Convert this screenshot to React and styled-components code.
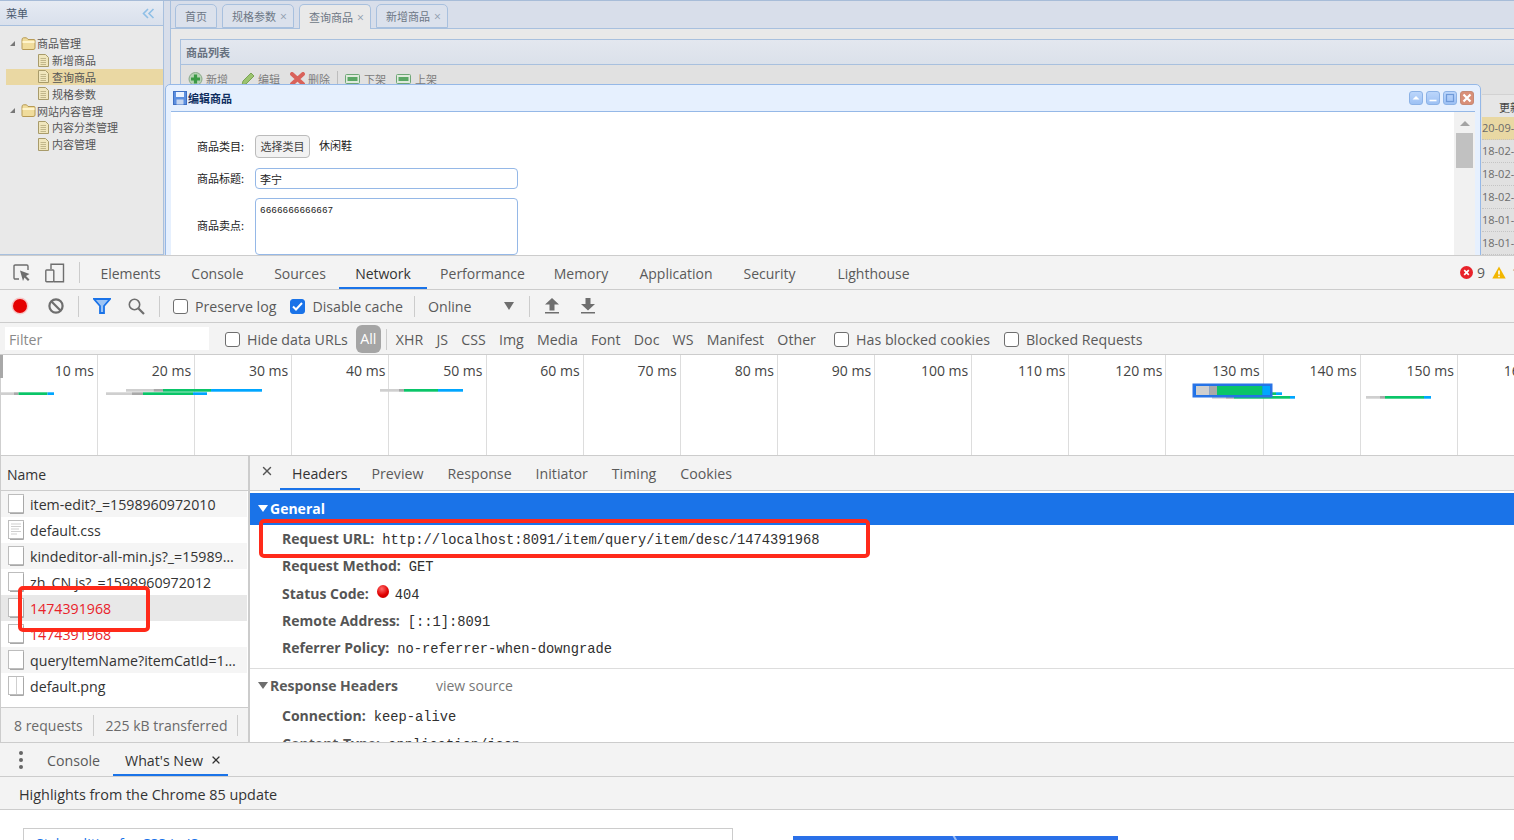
import React from 'react';
import styled, {createGlobalStyle} from 'styled-components';
import {X} from 'lucide-react';

const cjk = '"Noto Sans CJK SC", "Liberation Sans", sans-serif';
const ui = '"Open Sans", "Noto Sans", sans-serif';
const mono = '"Liberation Mono", monospace';

const GlobalStyle = createGlobalStyle`
    html, body { margin: 0; padding: 0; background: #fff; }
    * { box-sizing: border-box; }
`;

const Screen = styled.div`
    position: relative;
    width: 1514px;
    height: 840px;
    overflow: hidden;
    display: flex;
    flex-direction: column;
    font-family: ${ui};
`;

/* ---------- the admin page behind devtools ---------- */

const Page = styled.section`
    position: relative;
    flex: 0 0 255px;
    display: flex;
    overflow: hidden;
    background: #d8deea;
    border-top: 1px solid #a7bcd8;
    font-family: ${cjk};
    font-size: 11px;
`;

const Sidebar = styled.aside`
    flex: 0 0 164px;
    background: #e9e9e9;
    border-right: 1px solid #a8c0de;
    border-bottom: 1px solid #a8c0de;
`;

const SideHead = styled.div`
    height: 25px;
    display: flex;
    align-items: center;
    justify-content: space-between;
    padding: 0 8px 0 6px;
    color: #4b5a6e;
    background: linear-gradient(#e6ebf3, #d9e0ec);
    border-bottom: 1px solid #a8c0de;
`;

const Tree = styled.div`
    padding: 9px 0 0 6px;
`;

const TreeRow = styled.div`
    height: 16.8px;
    display: flex;
    align-items: center;
    padding-left: ${p => (p.$leaf ? 32 : 4)}px;
    color: #555;
    background: ${p => (p.$active ? '#ead8a3' : 'transparent')};
    gap: ${p => (p.$leaf ? 3 : 1)}px;
`;

const Caret = styled.span`
    width: 0;
    height: 0;
    margin-right: 5px;
    border-style: solid;
    border-width: 0 0 5px 5px;
    border-color: transparent transparent #777 transparent;
`;

const Main = styled.div`
    flex: 1;
    min-width: 0;
    margin-left: 6px;
    display: flex;
    flex-direction: column;
    border-left: 1px solid #a8c0de;
`;

const TabStrip = styled.div`
    height: 28px;
    padding: 3px 0 0 4px;
    display: flex;
    gap: 5px;
    border-bottom: 1px solid #a8c0de;
`;

const PageTab = styled.div`
    width: ${p => (p.$close ? 72 : 42)}px;
    height: ${p => (p.$active ? 25 : 24)}px;
    padding-left: 9px;
    display: flex;
    align-items: center;
    gap: 4px;
    color: #6d7785;
    background: ${p => (p.$active ? '#e9e9e9' : '#dbe1ec')};
    border: 1px solid #a8c0de;
    border-bottom: ${p => (p.$active ? 'none' : '1px solid #a8c0de')};
    border-radius: 5px 5px 0 0;

    span { color: #8f9cae; font-size: 12px; font-family: ${ui}; }
`;

const MainBody = styled.div`
    flex: 1;
    padding: 10px 0 0 9px;
    background: #e9e9e9;
`;

const Panel = styled.div`
    border-left: 1px solid #a8c0de;
    height: 100%;
`;

const PanelHead = styled.div`
    height: 26px;
    padding-left: 5px;
    display: flex;
    align-items: center;
    font-weight: 700;
    color: #67717f;
    background: linear-gradient(#e3e7ef, #dbe1ea);
    border-top: 1px solid #a8c0de;
    border-bottom: 1px solid #a8c0de;
`;

const PanelBody = styled.div`
    height: 190px;
    background: #e1e1e1;
    display: flex;
    flex-direction: column;
`;

const ActionBar = styled.div`
    height: 29px;
    padding: 6px 0 0 7px;
    display: flex;
    align-items: flex-start;
    color: #7d7d7d;
`;

const Action = styled.div`
    display: flex;
    align-items: center;
    gap: ${p => p.$inner || 3}px;
    margin-right: ${p => p.$gap || 11}px;
`;

const ActionSep = styled.i`
    width: 1px;
    height: 18px;
    background: #bdbdbd;
    margin-right: 7px;
`;

const GridStub = styled.div`
    margin-left: auto;
    width: 32px;
    font-family: ${ui};
    color: #6b6b6b;
    font-size: 11px;
`;

const GridHead = styled.div`
    height: 23px;
    padding: 4px 0 0 17px;
    font-family: ${cjk};
    color: #444;
    white-space: nowrap;
    overflow: hidden;
    background: #e6e6e6;
    border-top: 1px solid #d2d2d2;
`;

const GridCell = styled.div`
    height: 23px;
    line-height: 22px;
    white-space: nowrap;
    overflow: hidden;
    background: ${p => (p.$active ? '#e9d8a3' : 'transparent')};
    border-bottom: 1px dotted #c4c4c4;
`;

const Modal = styled.div`
    position: absolute;
    left: 165px;
    top: 83px;
    width: 1316px;
    height: 240px;
    background: #e6f0fe;
    border: 1px solid #95b8e7;
    border-radius: 5px 5px 0 0;
    padding: 0 5px;
`;

const ModalHead = styled.div`
    height: 26px;
    display: flex;
    align-items: center;
    gap: 1px;
    padding-left: 2px;
    color: #0e2d5f;
    font-weight: 700;
`;

const WinButtons = styled.div`
    margin-left: auto;
    display: flex;
    gap: 3px;
    padding-right: 1px;
`;

const WinButton = styled.div`
    width: 14px;
    height: 14px;
    border-radius: 3px;
    display: flex;
    align-items: center;
    justify-content: center;
    border: 1px solid ${p => (p.$close ? '#c58a76' : '#8cb2e6')};
    background: ${p => (p.$close ? '#d98f78' : 'linear-gradient(#bcd6fb, #9dc1f4)')};
`;

const ModalBody = styled.div`
    height: 200px;
    display: flex;
    background: #fff;
    border-top: 1px solid #95b8e7;
`;

const Form = styled.form`
    flex: 1;
    padding: 23px 0 0 26px;
    display: grid;
    grid-template-columns: 58px 263px;
    grid-template-rows: 24px 21px 57px;
    row-gap: 9px;
    align-items: center;
    align-content: start;
    color: #222;
`;

const FieldLabel = styled.span`
    padding-bottom: ${p => p.$lift || 2}px;
`;

const PickRow = styled.div`
    display: flex;
    align-items: center;
    gap: 9px;
    align-self: start;
    white-space: nowrap;
    line-height: 20px;
`;

const PickButton = styled.button`
    width: 55px;
    height: 23px;
    padding: 0 0 2px;
    font: 11px ${cjk};
    color: #444;
    background: #f2f2f2;
    border: 1px solid #bbb;
    border-radius: 4px;
`;

const PickValue = styled.span`
    padding-bottom: 3px;
`;

const TextInput = styled.input`
    width: 263px;
    height: 21px;
    padding: 0 4px;
    font: 11px ${cjk};
    color: #222;
    border: 1px solid #95b8e7;
    border-radius: 4px;
`;

const TextArea = styled.textarea`
    width: 263px;
    height: 57px;
    padding: 6px 4px;
    resize: none;
    font: 9.4px ${mono};
    color: #222;
    border: 1px solid #95b8e7;
    border-radius: 4px;
`;

const ScrollTrack = styled.div`
    width: 21px;
    padding-top: 9px;
    background: #f1f1f1;
    display: flex;
    flex-direction: column;
    align-items: center;

    i {
        width: 0;
        height: 0;
        border-style: solid;
        border-width: 0 5px 5px 5px;
        border-color: transparent transparent #a3a3a3 transparent;
    }

    b {
        width: 17px;
        height: 35px;
        margin-top: 7px;
        background: #c1c1c1;
    }
`;

/* ---------- devtools ---------- */

const Bar = styled.div`
    flex: 0 0 ${p => p.$h}px;
    display: flex;
    align-items: center;
    background: #f3f3f3;
    border-bottom: 1px solid #ccc;
    color: #5a5a5a;
    font-size: 14.2px;
    white-space: nowrap;
    overflow: hidden;
`;

const TopBar = styled(Bar)`
    border-top: 1px solid #ccc;
    padding-left: 13px;
    align-items: stretch;
    font-size: 14px;
`;

const IconSlot = styled.div`
    display: flex;
    align-items: center;
    margin-right: ${p => p.$gap || 0}px;
    margin-left: ${p => p.$left || 0}px;
`;

const Sep = styled.i`
    flex: none;
    width: 1px;
    height: 21px;
    background: #ccc;
    margin: ${p => p.$m || '0 14px'};
    align-self: center;
`;

const DevTab = styled.div`
    display: flex;
    align-items: center;
    justify-content: center;
    flex: none;
    width: ${p => (p.$w ? `${p.$w}px` : 'auto')};
    padding: 1px 0 0;
    color: ${p => (p.$active ? '#333' : '#5a5a5a')};
    border-bottom: 2px solid ${p => (p.$active ? '#1a73e8' : 'transparent')};
    border-top: 2px solid transparent;
`;

const Counts = styled.div`
    margin-left: auto;
    display: flex;
    align-items: center;
    gap: 4px;
    margin-right: -6px;
`;

const CheckBox = styled.span`
    flex: none;
    width: 15px;
    height: 15px;
    border-radius: 3px;
    display: inline-flex;
    align-items: center;
    justify-content: center;
    border: 1px solid ${p => (p.$on ? '#1a73e8' : '#6e6e6e')};
    background: ${p => (p.$on ? '#1a73e8' : '#fff')};
`;

const CheckLabel = styled.label`
    display: flex;
    align-items: center;
    gap: 7px;
    margin-left: ${p => p.$left || 0}px;
`;

const ToolRow = styled(Bar)`
    padding-left: 13px;
`;

const FilterRow = styled(ToolRow)`
    padding-top: 1px;
`;

const Filter = styled.div`
    width: 204px;
    height: 23px;
    margin: -1px 16px 0 -8px;
    padding-left: 4px;
    line-height: 26px;
    background: #fff;
    color: #8a8a8a;
`;

const AllPill = styled.span`
    width: 25px;
    height: 28px;
    margin: -1px 4px 0 8px;
    border-radius: 6px;
    display: flex;
    align-items: center;
    justify-content: center;
    color: #fff;
    background: #a5a5a5;
`;

const TypeItem = styled.span`
    margin-right: 13.2px;
`;

const Overview = styled.div`
    position: relative;
    flex: 0 0 101px;
    display: flex;
    padding-left: 0.8px;
    background: #fff;
    border-bottom: 1px solid #ccc;
    overflow: hidden;
`;

const Tick = styled.div`
    flex: 0 0 97.15px;
    padding: 6px 3px 0 0;
    text-align: right;
    color: #444;
    font-size: 14px;
    white-space: nowrap;
    border-right: 1px solid #ddd;
`;

const ChartLayer = styled.svg`
    position: absolute;
    left: 0;
    top: 0;
    width: 1514px;
    height: 100px;
`;

const Split = styled.div`
    flex: 0 0 287px;
    display: flex;
    overflow: hidden;
    background: #fff;
    border-bottom: 1px solid #ccc;
`;

const NamePane = styled.div`
    flex: 0 0 250px;
    display: flex;
    flex-direction: column;
    border-left: 1px solid #ccc;
    border-right: 2px solid #ccc;
`;

const NameHead = styled.div`
    flex: 0 0 35px;
    display: flex;
    align-items: center;
    padding: 2px 0 0 6px;
    color: #333;
    font-size: 14px;
    background: #f3f3f3;
    border-bottom: 1px solid #ccc;
`;

const ReqRow = styled.div`
    height: 26px;
    display: flex;
    align-items: center;
    gap: 5px;
    padding-left: 7px;
    margin-right: 1px;
    font-size: 14.2px;
    color: ${p => (p.$error ? '#e8222a' : '#333')};
    background: ${p => (p.$selected ? '#e8e8e8' : p.$even ? '#f5f5f5' : '#fff')};
    white-space: nowrap;
    overflow: hidden;
`;

const NameText = styled.span`
    overflow: hidden;
    text-overflow: ellipsis;
    width: 208px;
`;

const NameFoot = styled.div`
    margin-top: auto;
    flex: 0 0 35px;
    display: flex;
    align-items: center;
    padding-left: 13px;
    color: #6a6a6a;
    font-size: 14px;
    white-space: nowrap;
    background: #f3f3f3;
    border-top: 1px solid #ccc;
`;

const DetailPane = styled.div`
    flex: 1;
    min-width: 0;
    overflow: hidden;
`;

const DetailTabs = styled(Bar)`
    height: 35px;
    align-items: stretch;
    padding-left: 10px;
`;

const CloseBox = styled.div`
    display: flex;
    align-items: center;
    color: #555;
    margin-right: 6px;
    padding-bottom: 4px;
`;

const DetailTab = styled(DevTab)`
    padding: 0 12px;
`;

const SectionTitle = styled.div`
    height: ${p => (p.$blue ? 32 : 33)}px;
    margin-top: ${p => (p.$blue ? 2 : 0)}px;
    display: flex;
    align-items: center;
    gap: 2px;
    padding: 0 0 1px 8px;
    font-weight: 700;
    font-size: 14px;
    color: ${p => (p.$blue ? '#fff' : '#5a5a5a')};
    background: ${p => (p.$blue ? '#1a73e8' : '#fff')};

    em {
        font-style: normal;
        font-weight: 400;
        color: #777;
        margin-left: 36px;
    }
`;

const Triangle = styled.i`
    width: 0;
    height: 0;
    border-style: solid;
    border-width: 7px 5px 0 5px;
    border-color: ${p => (p.$blue ? '#fff' : '#6e6e6e')} transparent transparent transparent;
`;

const HeaderList = styled.div`
    padding: 0 0 7px 32px;
    border-bottom: ${p => (p.$open ? 'none' : '1px solid #ddd')};
`;

const HeaderRow = styled.div`
    height: 27.25px;
    line-height: 27px;
    display: flex;
    align-items: baseline;
    gap: 8px;
    white-space: nowrap;
    font-size: 14px;
    color: #555;

    b { font-weight: 700; }
    span { font: 13.75px ${mono}; color: #303030; }
`;

const StatusDot = styled.i`
    align-self: center;
    width: 12px;
    height: 13px;
    margin: -4px -2px 0 0;
    border-radius: 50%;
    background: radial-gradient(circle at 40% 30%, #ff6a6a, #e00000 55%, #b40000);
`;

const DrawerTabs = styled(Bar)`
    align-items: stretch;
    padding-left: 19px;
`;

const Dots = styled.div`
    width: 4px;
    margin-right: 14px;
    display: flex;
    flex-direction: column;
    justify-content: center;
    gap: 3px;

    i { width: 4px; height: 4px; border-radius: 50%; background: #666; }
`;

const DrawerTab = styled(DevTab)`
    padding: 1px ${p => (p.$active ? '6px' : '10px')} 0 ${p => (p.$active ? '12px' : '10px')};
    gap: 7px;
    margin-left: ${p => p.$left || 0}px;
`;

const Highlights = styled(Bar)`
    padding: 2px 0 0 19px;
    font-size: 14.4px;
    color: #333;
`;

const NewsArea = styled.div`
    flex: 1;
    display: flex;
    align-items: flex-start;
    padding: 18px 0 0 23px;
    background: #fff;
    overflow: hidden;
`;

const NewsCard = styled.div`
    width: 710px;
    height: 40px;
    padding: 5px 0 0 12px;
    font-size: 14px;
    color: #1a73e8;
    border: 1px solid #ccc;
`;

const NewsImage = styled.div`
    position: relative;
    width: 325px;
    height: 20px;
    margin: 8px 0 0 60px;
    overflow: hidden;
    background: #2a70e8;

    &::after {
        content: '';
        position: absolute;
        left: 162px;
        top: -2px;
        width: 2px;
        height: 12px;
        background: #9fc0f5;
        transform: rotate(-30deg);
    }
`;

const Annotation = styled.div`
    position: absolute;
    left: ${p => p.$x}px;
    top: ${p => p.$y}px;
    width: ${p => p.$w}px;
    height: ${p => p.$h}px;
    border: 4px solid #ff2a1a;
    border-radius: 5px;
    pointer-events: none;
`;

/* ---------- drawings ---------- */

const Folder = () => (
    <svg width="15" height="13" viewBox="0 0 15 13">
        <path d="M1 3 L1 11.5 Q1 12.5 2 12.5 L12 12.5 Q14 12.5 14 11 L14 3.5 Q14 2.5 13 2.5 L7 2.5 L5.5 .8 L2.5 .8 Q1 .8 1 3Z" fill="#f0dc9c" stroke="#b79a55" />
        <path d="M1.5 5 L13.5 5" stroke="#fff4cc" strokeWidth="2" />
    </svg>
);

const Doc = () => (
    <svg width="11" height="13" viewBox="0 0 11 13">
        <path d="M.5 .5 H7.5 L10.5 3.5 V12.5 H.5Z" fill="#f0e6bd" stroke="#a89b6a" />
        <path d="M2.5 4.5 H8 M2.5 6.5 H8 M2.5 8.5 H8 M2.5 10.5 H8" stroke="#b5a97c" strokeWidth=".8" />
    </svg>
);

const Collapse = () => (
    <svg width="13" height="11" viewBox="0 0 13 11" fill="none" stroke="#8fbfe6" strokeWidth="1.6">
        <path d="M6 1 L1.5 5.5 L6 10 M11.5 1 L7 5.5 L11.5 10" />
    </svg>
);

const PlusIcon = () => (
    <svg width="15" height="14" viewBox="0 0 15 14">
        <circle cx="7.5" cy="7" r="6.5" fill="#b6d3b4" stroke="#8aa98a" />
        <path d="M7.5 2.5 V11.5 M3 7 H12" stroke="#3b9a45" strokeWidth="3.2" />
    </svg>
);

const PencilIcon = () => (
    <svg width="15" height="14" viewBox="0 0 15 14">
        <path d="M2 13 L3 9 L11 1 L14 4 L6 12Z" fill="#9cc46f" stroke="#7aa356" />
    </svg>
);

const CrossIcon = () => (
    <svg width="15" height="14" viewBox="0 0 15 14">
        <path d="M2 2 L13 12 M13 2 L2 12" stroke="#d9625a" strokeWidth="4" strokeLinecap="round" />
    </svg>
);

const BarIcon = () => (
    <svg width="15" height="12" viewBox="0 0 15 12">
        <rect x=".5" y="1.5" width="14" height="9" rx="1" fill="#dfeadd" stroke="#6fa777" />
        <rect x="2.5" y="4" width="10" height="4" fill="#5aa765" />
    </svg>
);

const SaveIcon = () => (
    <svg width="14" height="14" viewBox="0 0 14 14">
        <rect x=".5" y=".5" width="13" height="13" fill="#5c8fe0" stroke="#3f70c4" />
        <rect x="3" y="1" width="8" height="5" fill="#eaf2ff" />
        <rect x="3.5" y="8.5" width="7" height="5" fill="#c6d6ef" />
    </svg>
);

const WinGlyph = ({kind}) => (
    <svg width="10" height="10" viewBox="0 0 10 10">
        {kind === 'up' && <path d="M1.5 6.5 L5 3 L8.5 6.5Z" fill="#fff" />}
        {kind === 'min' && <path d="M1.5 7.5 H8.5" stroke="#fff" strokeWidth="1.6" />}
        {kind === 'max' && <rect x="1.5" y="1.5" width="7" height="7" fill="none" stroke="#6f9ad9" strokeWidth="1.2" />}
        {kind === 'close' && <path d="M1.5 1.5 L8.5 8.5 M8.5 1.5 L1.5 8.5" stroke="#fff" strokeWidth="2.2" />}
    </svg>
);

const InspectIcon = () => (
    <svg width="18" height="18" viewBox="0 0 18 18" fill="none">
        <path d="M6 15 H2.2 Q1 15 1 13.8 V2.2 Q1 1 2.2 1 H13.8 Q15 1 15 2.2 V6" stroke="#6e6e6e" strokeWidth="1.4" />
        <path d="M7 6.5 L16.5 10 L13 12 L16.5 15.5 L15 17 L11.5 13.5 L10 17Z" fill="#6e6e6e" />
    </svg>
);

const DeviceIcon = () => (
    <svg width="20" height="20" viewBox="0 0 20 20" fill="none" stroke="#6e6e6e" strokeWidth="1.4">
        <path d="M6 6 V1.2 H18.5 V18.8 H9" />
        <rect x=".8" y="7" width="8" height="11.8" rx=".8" />
    </svg>
);

const ErrorIcon = () => (
    <svg width="13" height="13" viewBox="0 0 13 13">
        <circle cx="6.5" cy="6.5" r="6.5" fill="#e8222a" />
        <path d="M4.2 4.2 L8.8 8.8 M8.8 4.2 L4.2 8.8" stroke="#fff" strokeWidth="1.7" />
    </svg>
);

const WarnIcon = () => (
    <svg width="14" height="13" viewBox="0 0 14 13">
        <path d="M7 .5 L13.7 12.5 H.3Z" fill="#f2b600" />
        <path d="M7 4.5 V8.5 M7 9.8 V11.3" stroke="#fff" strokeWidth="1.6" />
    </svg>
);

const RecordIcon = () => (
    <svg width="18" height="18" viewBox="0 0 18 18">
        <circle cx="9" cy="9" r="8.5" fill="#f5c6c6" />
        <circle cx="9" cy="9" r="7" fill="#e50000" />
    </svg>
);

const ClearIcon = () => (
    <svg width="16" height="16" viewBox="0 0 16 16" fill="none" stroke="#6e6e6e" strokeWidth="2.2">
        <circle cx="8" cy="8" r="6.6" />
        <path d="M3.5 3.5 L12.5 12.5" />
    </svg>
);

const FunnelIcon = () => (
    <svg width="18" height="16" viewBox="0 0 18 16" fill="none">
        <path d="M1 1 H17 L11 8 V15 H7 V8Z" stroke="#1a73e8" strokeWidth="1.8" fill="#9cc4f5" />
    </svg>
);

const SearchIcon = () => (
    <svg width="17" height="17" viewBox="0 0 17 17" fill="none" stroke="#6e6e6e">
        <circle cx="6.5" cy="6.5" r="5.2" strokeWidth="1.6" />
        <path d="M10.5 10.5 L16 16" strokeWidth="2.2" />
    </svg>
);

const ArrowIcon = ({down}) => (
    <svg width="14" height="16" viewBox="0 0 14 16" fill="#6e6e6e">
        {down
            ? <path d="M4.5 0 H9.5 V6 H14 L7 12.5 L0 6 H4.5Z M0 14 H14 V15.5 H0Z" />
            : <path d="M7 0 L14 6.5 H9.5 V12.5 H4.5 V6.5 H0Z M0 14 H14 V15.5 H0Z" />}
    </svg>
);

const Tick2 = () => (
    <svg width="11" height="9" viewBox="0 0 11 9" fill="none" stroke="#fff" strokeWidth="2">
        <path d="M1 4.5 L4 7.5 L10 1" />
    </svg>
);

const FileIcon = ({kind}) => (
    <svg width="17" height="20" viewBox="0 0 17 20" style={{flex: 'none'}}>
        <rect x=".5" y=".5" width="15" height="18" fill="#fff" stroke="#bdbdbd" />
        <path d="M15.5 2 V19.5 H2" stroke="#a8a8a8" fill="none" />
        {kind === 'css' && <path d="M3 4 H13 M3 6.5 H13 M3 9 H11 M3 11.5 H13 M3 14 H9" stroke="#cfcfcf" />}
        {kind === 'png' && <path d="M8.5 1 V18" stroke="#cfcfcf" />}
    </svg>
);

/* ---------- data ---------- */

const pageTabs = [
    {label: '首页'},
    {label: '规格参数', close: true},
    {label: '查询商品', close: true, active: true},
    {label: '新增商品', close: true},
];

const tree = [
    {label: '商品管理'},
    {label: '新增商品', leaf: true},
    {label: '查询商品', leaf: true, active: true},
    {label: '规格参数', leaf: true},
    {label: '网站内容管理'},
    {label: '内容分类管理', leaf: true},
    {label: '内容管理', leaf: true},
];

const devTabs = [
    ['Elements', 87], ['Console', 87], ['Sources', 78], ['Network', 88], ['Performance', 111],
    ['Memory', 86], ['Application', 104], ['Security', 83], ['Lighthouse', 125],
];
const types = ['XHR', 'JS', 'CSS', 'Img', 'Media', 'Font', 'Doc', 'WS', 'Manifest', 'Other'];
const ticks = [10, 20, 30, 40, 50, 60, 70, 80, 90, 100, 110, 120, 130, 140, 150, 160];

const requests = [
    {name: 'item-edit?_=1598960972010'},
    {name: 'default.css', kind: 'css'},
    {name: 'kindeditor-all-min.js?_=1598960972011'},
    {name: 'zh_CN.js?_=1598960972012'},
    {name: '1474391968', error: true, selected: true},
    {name: '1474391968', error: true},
    {name: 'queryItemName?itemCatId=1234567890'},
    {name: 'default.png', kind: 'png'},
];

// y, then x positions of one waterfall bar: start, waiting, receiving, download, end
const bars = [
    [392.3, 0, 14, 18.5, 47.5, 54],
    [389, 126, 153.5, 163, 211, 262],
    [392.3, 106, 132, 143, 193, 207],
    [389, 380, 399, 404, 438, 463],
    [392.3, 1200, 1212, 1222, 1276, 1282],
    [396, 1212, 1226, 1234, 1290, 1295],
    [396, 1366, 1380, 1385, 1424, 1431],
];

const Waterfall = ({y, top, xs, h = 2.7}) => {
    const colors = ['#cfcfcf', '#a9a9a9', '#0ac568', '#00a6ff'];
    return colors.map((c, i) => (
        <rect key={c} x={xs[i]} y={y - top} width={xs[i + 1] - xs[i]} height={h} fill={c} />
    ));
};

const App = () => (
    <Screen>
        <GlobalStyle />

        <Page>
            <Sidebar>
                <SideHead>菜单<Collapse /></SideHead>
                <Tree>
                    {tree.map(t => (
                        <TreeRow key={t.label} $leaf={t.leaf} $active={t.active}>
                            {!t.leaf && <Caret />}
                            {t.leaf ? <Doc /> : <Folder />}
                            {t.label}
                        </TreeRow>
                    ))}
                </Tree>
            </Sidebar>
            <Main>
                <TabStrip>
                    {pageTabs.map(t => (
                        <PageTab key={t.label} $active={t.active} $close={t.close}>
                            {t.label}
                            {t.close && <span>×</span>}
                        </PageTab>
                    ))}
                </TabStrip>
                <MainBody>
                    <Panel>
                        <PanelHead>商品列表</PanelHead>
                        <PanelBody>
                            <ActionBar>
                                <Action $gap={12}><PlusIcon />新增</Action>
                                <Action $gap={10}><PencilIcon />编辑</Action>
                                <Action $gap={7}><CrossIcon />删除</Action>
                                <ActionSep />
                                <Action $gap={10} $inner={4}><BarIcon />下架</Action>
                                <Action $inner={4}><BarIcon />上架</Action>
                            </ActionBar>
                            <GridStub>
                                <GridHead>更新</GridHead>
                                <GridCell $active>20-09-</GridCell>
                                <GridCell>18-02-</GridCell>
                                <GridCell>18-02-</GridCell>
                                <GridCell>18-02-</GridCell>
                                <GridCell>18-01-</GridCell>
                                <GridCell>18-01-</GridCell>
                            </GridStub>
                        </PanelBody>
                    </Panel>
                </MainBody>
            </Main>

            <Modal>
                <ModalHead>
                    <SaveIcon />编辑商品
                    <WinButtons>
                        <WinButton><WinGlyph kind="up" /></WinButton>
                        <WinButton><WinGlyph kind="min" /></WinButton>
                        <WinButton><WinGlyph kind="max" /></WinButton>
                        <WinButton $close><WinGlyph kind="close" /></WinButton>
                    </WinButtons>
                </ModalHead>
                <ModalBody>
                    <Form>
                        <FieldLabel>商品类目:</FieldLabel>
                        <PickRow>
                            <PickButton type="button">选择类目</PickButton>
                            <PickValue>休闲鞋</PickValue>
                        </PickRow>
                        <FieldLabel $lift={1}>商品标题:</FieldLabel>
                        <TextInput defaultValue="李宁" />
                        <FieldLabel $lift={4}>商品卖点:</FieldLabel>
                        <TextArea defaultValue="6666666666667" />
                    </Form>
                    <ScrollTrack><i /><b /></ScrollTrack>
                </ModalBody>
            </Modal>
        </Page>

        <TopBar $h={35}>
            <IconSlot $gap={14}><InspectIcon /></IconSlot>
            <IconSlot><DeviceIcon /></IconSlot>
            <Sep $m="0 7px 0 14px" />
            {devTabs.map(([t, w]) => (
                <DevTab key={t} $w={w} $active={t === 'Network'}>{t}</DevTab>
            ))}
            <Counts>
                <ErrorIcon />9
                <IconSlot $left={3} $gap={2}><WarnIcon /></IconSlot>
                1
            </Counts>
        </TopBar>

        <ToolRow $h={33}>
            <IconSlot $left={-2} $gap={19}><RecordIcon /></IconSlot>
            <IconSlot><ClearIcon /></IconSlot>
            <Sep />
            <IconSlot $gap={17}><FunnelIcon /></IconSlot>
            <IconSlot><SearchIcon /></IconSlot>
            <Sep $m="0 13px 0 14px" />
            <CheckLabel><CheckBox />Preserve log</CheckLabel>
            <CheckLabel $left={14}><CheckBox $on><Tick2 /></CheckBox>Disable cache</CheckLabel>
            <Sep $m="0 13px 0 11px" />
            Online
            <IconSlot $left={32}>
                <svg width="10" height="8" viewBox="0 0 10 8"><path d="M0 0 H10 L5 8Z" fill="#6e6e6e" /></svg>
            </IconSlot>
            <Sep $m="0 15px 0 15px" />
            <IconSlot $gap={22}><ArrowIcon /></IconSlot>
            <IconSlot><ArrowIcon down /></IconSlot>
        </ToolRow>

        <FilterRow $h={32}>
            <Filter>Filter</Filter>
            <CheckLabel><CheckBox />Hide data URLs</CheckLabel>
            <AllPill>All</AllPill>
            <Sep $m="0 9px 0 1px" />
            {types.map(t => <TypeItem key={t}>{t}</TypeItem>)}
            <CheckLabel $left={5}><CheckBox />Has blocked cookies</CheckLabel>
            <CheckLabel $left={14}><CheckBox />Blocked Requests</CheckLabel>
        </FilterRow>

        <Overview>
            {ticks.map(t => <Tick key={t}>{t} ms</Tick>)}
            <ChartLayer viewBox="0 0 1514 100">
                <rect x="0" y="0" width="3" height="23" fill="#a8a8a8" />
                <rect x="0" y="23" width="1" height="77" fill="#cfcfcf" />
                {bars.map(b => <Waterfall key={`${b[0]}-${b[1]}`} y={b[0]} top={355} xs={b.slice(1)} />)}
                <rect x="1193.5" y="29.5" width="78" height="12" fill="#1a73e8" />
                <Waterfall y={386} top={355} xs={[1196, 1209.5, 1217, 1262.5, 1270]} h={9} />
                <rect x="1193.5" y="29.5" width="78" height="12" fill="none" stroke="#2a74e6" strokeWidth="2" />
            </ChartLayer>
        </Overview>

        <Split>
            <NamePane>
                <NameHead>Name</NameHead>
                {requests.map((r, i) => (
                    <ReqRow key={r.name + i} $even={i % 2 === 0} $error={r.error} $selected={r.selected}>
                        <FileIcon kind={r.kind} />
                        <NameText>{r.name}</NameText>
                    </ReqRow>
                ))}
                <NameFoot>
                    8 requests
                    <Sep $m="0 12px 0 10px" />
                    225 kB transferred
                    <Sep $m="0 0 0 10px" />
                </NameFoot>
            </NamePane>
            <DetailPane>
                <DetailTabs $h={35}>
                    <CloseBox><X size={14} strokeWidth={2.4} /></CloseBox>
                    <DetailTab $active>Headers</DetailTab>
                    <DetailTab>Preview</DetailTab>
                    <DetailTab>Response</DetailTab>
                    <DetailTab>Initiator</DetailTab>
                    <DetailTab>Timing</DetailTab>
                    <DetailTab>Cookies</DetailTab>
                </DetailTabs>
                <SectionTitle $blue><Triangle $blue />General</SectionTitle>
                <HeaderList>
                    <HeaderRow><b>Request URL:</b><span>http://localhost:8091/item/query/item/desc/1474391968</span></HeaderRow>
                    <HeaderRow><b>Request Method:</b><span>GET</span></HeaderRow>
                    <HeaderRow><b>Status Code:</b><StatusDot /><span>404</span></HeaderRow>
                    <HeaderRow><b>Remote Address:</b><span>[::1]:8091</span></HeaderRow>
                    <HeaderRow><b>Referrer Policy:</b><span>no-referrer-when-downgrade</span></HeaderRow>
                </HeaderList>
                <SectionTitle><Triangle />Response Headers<em>view source</em></SectionTitle>
                <HeaderList $open>
                    <HeaderRow><b>Connection:</b><span>keep-alive</span></HeaderRow>
                    <HeaderRow><b>Content-Type:</b><span>application/json</span></HeaderRow>
                </HeaderList>
            </DetailPane>
        </Split>

        <DrawerTabs $h={34}>
            <Dots><i /><i /><i /></Dots>
            <DrawerTab>Console</DrawerTab>
            <DrawerTab $active $left={3}>What's New<X size={12} strokeWidth={2.4} /></DrawerTab>
        </DrawerTabs>
        <Highlights $h={33}>Highlights from the Chrome 85 update</Highlights>
        <NewsArea>
            <NewsCard>Style editing for CSS-in-JS</NewsCard>
            <NewsImage />
        </NewsArea>

        <Annotation $x={259} $y={519} $w={611} $h={39} />
        <Annotation $x={18} $y={586} $w={132} $h={46} />
    </Screen>
);

export default App;
